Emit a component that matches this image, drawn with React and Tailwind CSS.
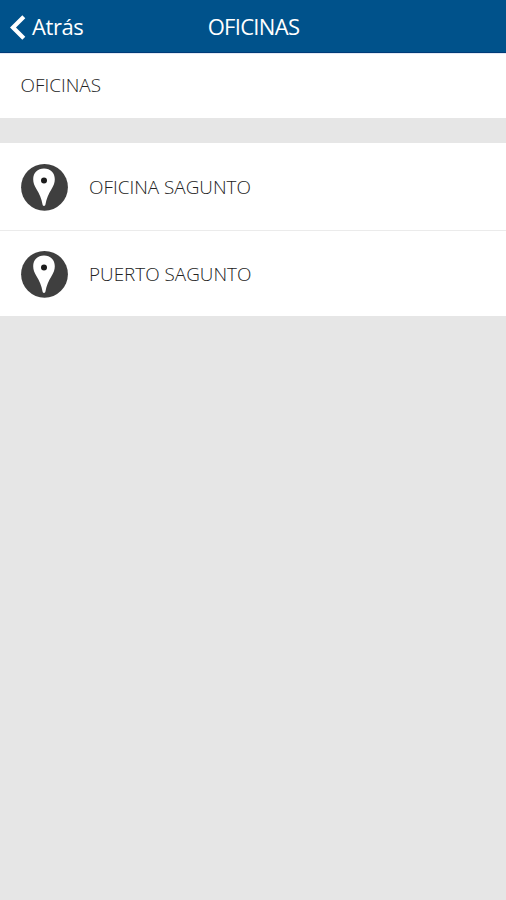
const offices = [
  { id: 'sagunto', name: 'OFICINA SAGUNTO' },
  { id: 'puerto', name: 'PUERTO SAGUNTO' },
];

function PinIcon() {
  return (
    <svg viewBox="0 0.2 48 48" className="w-12 h-12 shrink-0" aria-hidden="true">
      <circle cx="24.5" cy="24.5" r="23.4" fill="#3f3f3f" />
      <path
        d="M24 5.8c-6.4 0-10.8 4.4-10.8 10.7 0 3.4 1.2 6.5 3.2 9.7 3.2 5 5.1 9.8 6.1 15.2.2 1.2.6 1.7 1.5 1.7s1.300-.5 1.500-1.700c1-5.400 2.900-10.200 6.100-15.200 2-3.200 3.200-6.300 3.200-9.700C34.800 10.200 30.400 5.800 24 5.800z"
        fill="#fff"
      />
      <circle cx="24" cy="17.6" r="3" fill="#1c1c1c" />
    </svg>
  );
}

function Header() {
  return (
    <header className="grid grid-cols-3 items-center h-[53px] pt-px bg-[#00528b] border-b border-[#003b78] text-white text-[22px]">
      <button type="button" className="flex items-center pl-[10px]">
        <svg viewBox="0 0 16 25" className="w-4 h-[25px] mt-px shrink-0" aria-hidden="true">
          <path d="M13.8 1.8 3 12.5 13.8 23.2" fill="none" stroke="#fff" strokeWidth="4.2" />
        </svg>
        <span className="ml-1.5 tracking-[-0.4px]">Atrás</span>
      </button>
      <h1 className="pl-px text-center tracking-[-0.7px]">OFICINAS</h1>
    </header>
  );
}

function OfficeRow({ name }) {
  return (
    <li className="flex items-center gap-5 h-[88px] pt-px pl-5 bg-white border-b border-[#ebebeb] last:h-[85px] last:border-b-0">
      <PinIcon />
      <span className="pl-px">{name}</span>
    </li>
  );
}

export default function App() {
  return (
    <div className="min-h-screen bg-[#e6e6e6] font-['Open_Sans','Noto_Sans',sans-serif]">
      <Header />
      <main className="text-[18.9px] font-light text-[#222]">
        <h2 className="flex items-center h-[65px] pb-px pl-[20.5px] bg-white border-t border-[#e3e9f4]">
          OFICINAS
        </h2>
        <ul className="mt-[25px]">
          {offices.map((office) => (
            <OfficeRow key={office.id} name={office.name} />
          ))}
        </ul>
      </main>
    </div>
  );
}
